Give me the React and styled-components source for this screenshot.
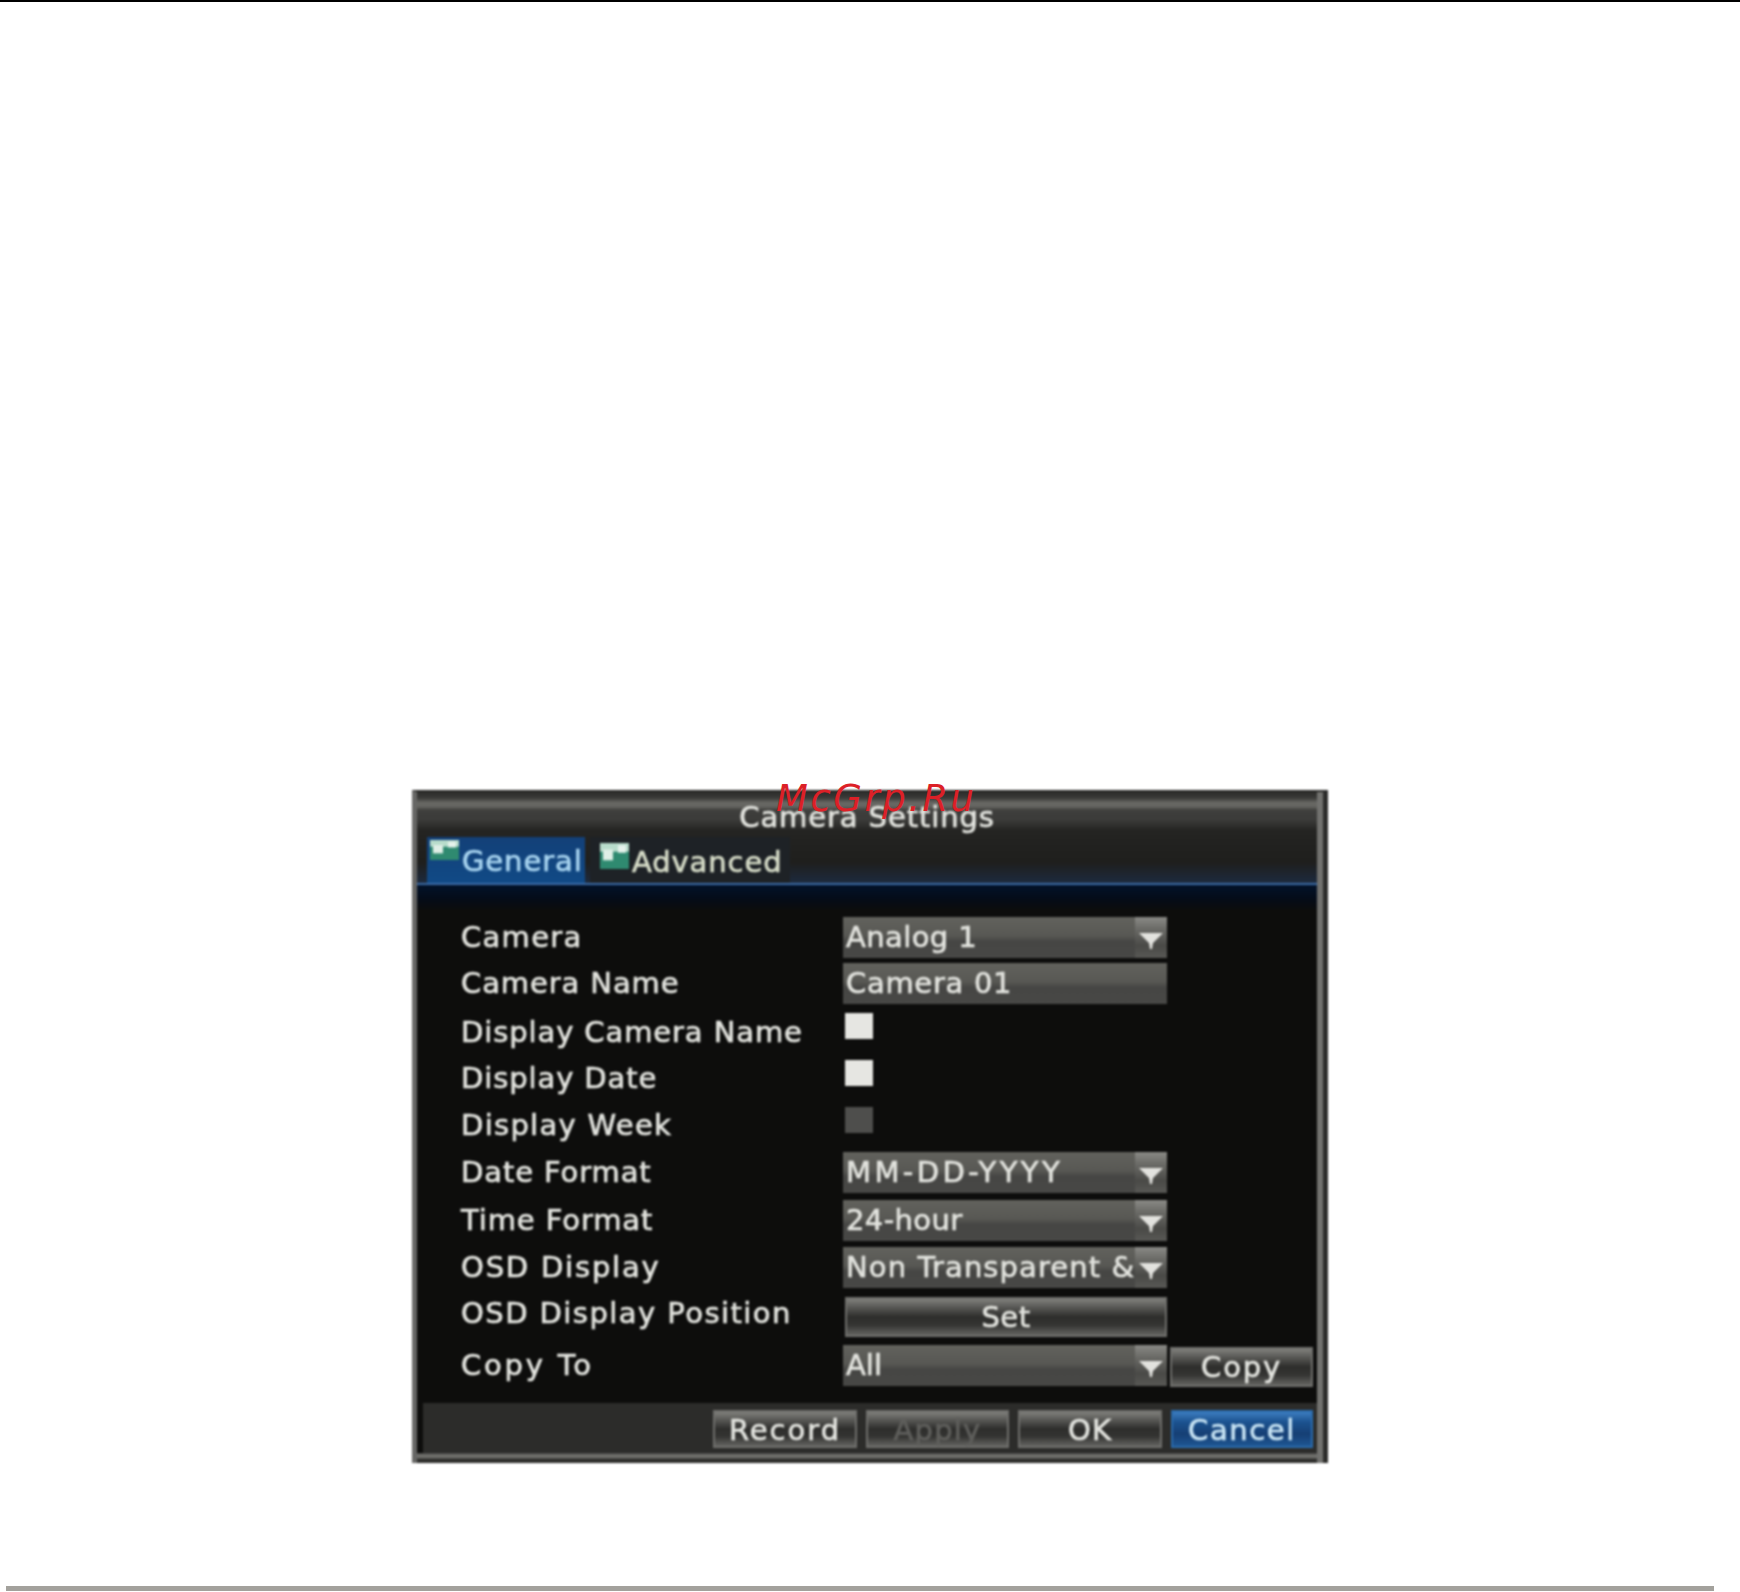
import React from "react";
import styled, { createGlobalStyle } from "styled-components";

const Global = createGlobalStyle`
  html, body { margin: 0; padding: 0; background: #fff; }
  #root { width: 1740px; height: 1592px; overflow: hidden; }
`;
const Page = styled.div`
  width: 1740px; height: 1592px; display: flex; flex-direction: column; background: #fff;
`;
const TopRule = styled.div`height: 2px; background: #000; flex: none;`;
const Main = styled.div`flex: 1; padding: 788px 0 0 412px;`;
const BottomRule = styled.div`
  height: 5px; margin: 0 26px 1px 6px; background: #a3a19c; flex: none;
`;
const Stage = styled.div`position: relative; width: 916px; height: 673px;`;
const Watermark = styled.div`
  position: absolute; left: 364px; top: -13px; font: italic 400 37px/44px "DejaVu Sans", sans-serif;
  color: #dc2027; letter-spacing: 2.5px; white-space: nowrap;
`;
const Dialog = styled.div`
  box-sizing: border-box; width: 916px; height: 673px; background: #0d0d0c;
  border-left: 5px solid #676765; border-right: 5px solid #2c2c2a; border-top: 2px solid #2a2a28;
  display: flex; flex-direction: column; filter: blur(1px);
  font-family: "DejaVu Sans", sans-serif; color: #e2e3de;
  -webkit-text-stroke: 0.7px currentColor;
`;
const Inner = styled.div`
  flex: 1; display: flex; flex-direction: column; border-right: 6px solid #72726f; min-height: 0;
`;
const TitleBar = styled.div`
  height: 45px; flex: none; text-align: center; font-size: 29px; line-height: 50px;
  letter-spacing: 0.9px; white-space: nowrap;
  background: linear-gradient(#2d2d2b 0, #3a3a38 6px, #6a6a66 11px, #62625e 15px, #3f3f3d 18px, #3b3b39 28px, #252523 38px, #232321 45px);
`;
const TabBar = styled.div`
  height: 48px; flex: none; display: flex; padding: 0 0 0 10px; gap: 5px; box-sizing: border-box;
  background: linear-gradient(#232321 0, #1f1f1d 55%, #1d2a3e 100%);
  border-bottom: 2px solid #3c6ba6;
`;
const Tab = styled.div`
  display: flex; width: ${p => p.$w}px; height: 46px; background: ${p => p.$active ? "linear-gradient(#134078, #114a86)" : "#1e2226"};
  color: ${p => p.$active ? "#a8d4f0" : "#d6dcc8"}; font-size: 29px; letter-spacing: 0.9px; line-height: ${p => p.$lh}px;
  gap: 3px; box-sizing: border-box; padding-left: ${p => p.$pad}px;
`;
const TabIcon = styled.svg`width: 29px; height: ${p => p.$h}px; margin-top: ${p => p.$top}px; flex: none;`;
const Form = styled.div`
  flex: 1; display: flex; flex-direction: column; padding: 32px 0 0 44px; min-height: 0;
  background: linear-gradient(#02122a 0, #050c18 14px, #0d0d0c 26px);
`;
const Row = styled.div`
  display: grid; grid-template-columns: 382px 324px 146px; height: ${p => p.$h}px; flex: none;
`;
const Label = styled.div`
  font-size: 29px; letter-spacing: ${p => p.$ls ?? 0.9}px; line-height: 41px; height: 41px; white-space: nowrap;
`;
const Field = styled.div`
  position: relative; height: 41px; box-sizing: border-box; padding: 0 0 0 3px; font-size: 29px; line-height: 41px;
  letter-spacing: ${p => p.$ls ?? 0.9}px;
  white-space: nowrap; overflow: hidden;
  background: linear-gradient(#62625d 0, #585854 45%, #464644 60%, #484846 100%);
`;
const ArrowBox = styled.div`
  position: absolute; right: 0; top: 0; width: 32px; height: 41px;
  background: linear-gradient(#8a8a86 0, #6a6a66 30%, #4a4a47 70%, #585855 100%);
`;
const ArrowSvg = styled.svg`display: block;`;
const Check = styled.div`
  width: 28px; height: 26px; margin: ${p => p.$top}px 0 0 2px;
  background: ${p => p.$off ? "#4e4e4c" : "#e6e6e2"};
`;
const Btn = styled.div`
  box-sizing: border-box; height: ${p => p.$h || 38}px; width: ${p => p.$w}px; flex: none;
  margin: ${p => p.$m || 0};
  border: 2px solid ${p => p.$blue ? "#2a6aab" : "#6e6e6b"};
  text-align: center; font-size: 29px; letter-spacing: ${p => p.$ls ?? 1.2}px; line-height: 36px;
  color: ${p => p.$dim ? "#5e5e5b" : p.$blue ? "#c8e4f4" : "#e2e3de"};
  background: ${p => p.$blue
    ? "linear-gradient(#3d7dc0 0, #1b528f 30%, #163f74 65%, #1e5692 100%)"
    : "linear-gradient(#80807c 0, #5a5a57 22%, #2e2e2c 50%, #343432 72%, #636360 100%)"};
`;
const Footer = styled.div`
  height: 50px; flex: none; display: flex; justify-content: flex-end; gap: 9px; padding: 7px 4px 0 0; box-sizing: border-box;
  background: #2c2c2a; margin-left: 6px;
`;
const FooterEdge = styled.div`
  height: 10px; flex: none; background: linear-gradient(#3a3a38 0, #72726f 2px, #6a6a66 5px, #2e2e2c 6px);
`;

const Arrow = () => (
  <ArrowBox>
    <ArrowSvg width="32" height="41" viewBox="0 0 32 41">
      <polygon points="4,16 28,16 18,26 17,32 15,32 14,26" fill="#e2e2de" />
    </ArrowSvg>
  </ArrowBox>
);

const Icon = ({ h, top }) => (
  <TabIcon $h={h} $top={top} viewBox="0 0 29 24" preserveAspectRatio="none">
    <rect width="29" height="24" fill="#2f8a70" />
    <rect width="29" height="8" fill="#b8dccb" />
    <rect x="3" y="6" width="10" height="10" fill="#dfeee6" />
    <rect x="18" y="2" width="8" height="7" fill="#e6f2ec" />
  </TabIcon>
);

const rows = [
  { label: "Camera", h: 46, type: "select", value: "Analog 1", ls: 0.4, lls: 1.3 },
  { label: "Camera Name", h: 49, type: "input", value: "Camera 01", ls: 0.7 },
  { label: "Display Camera Name", h: 46, type: "check", top: 1 },
  { label: "Display Date", h: 47, type: "check", top: 2 },
  { label: "Display Week", h: 47, type: "check", top: 2, off: true, lls: 1.3 },
  { label: "Date Format", h: 48, type: "select", value: "MM-DD-YYYY", ls: 3.4 },
  { label: "Time Format", h: 47, type: "select", value: "24-hour", ls: 0.4 },
  { label: "OSD Display", h: 46, type: "select", value: "Non Transparent &", ls: 1.1, lls: 1.8 },
  { label: "OSD Display Position", h: 52, type: "set", lls: 1.45 },
  { label: "Copy To", h: 56, type: "select", value: "All", ls: 0, copy: true, lls: 2.8 },
];

export default function App() {
  return (
    <Page>
      <Global />
      <TopRule />
      <Main>
        <Stage>
          <Dialog>
            <Inner>
              <TitleBar>Camera Settings</TitleBar>
              <TabBar>
                <Tab $active $w={158} $pad={3} $lh={48}><Icon h={20} top={3} />General</Tab>
                <Tab $w={200} $pad={10} $lh={50}><Icon h={26} top={6} />Advanced</Tab>
              </TabBar>
              <Form>
                {rows.map(r => (
                  <Row key={r.label} $h={r.h}>
                    <Label $ls={r.lls}>{r.label}</Label>
                    {r.type === "select" && <Field $ls={r.ls}>{r.value}<Arrow /></Field>}
                    {r.type === "input" && <Field $ls={r.ls}>{r.value}</Field>}
                    {r.type === "check" && <Check $top={r.top} $off={r.off} />}
                    {r.type === "set" && <Btn $w={322} $h={40} $m="4px 0 0 2px" $ls={0.5}>Set</Btn>}
                    {r.copy && <Btn $w={143} $h={40} $m="2px 0 0 3px" $ls={1.8}>Copy</Btn>}
                  </Row>
                ))}
              </Form>
              <Footer>
                <Btn $w={144} $ls={2}>Record</Btn>
                <Btn $w={143} $dim>Apply</Btn>
                <Btn $w={144}>OK</Btn>
                <Btn $w={142} $blue $ls={1.6}>Cancel</Btn>
              </Footer>
              <FooterEdge />
            </Inner>
          </Dialog>
          <Watermark>McGrp.Ru</Watermark>
        </Stage>
      </Main>
      <BottomRule />
    </Page>
  );
}
